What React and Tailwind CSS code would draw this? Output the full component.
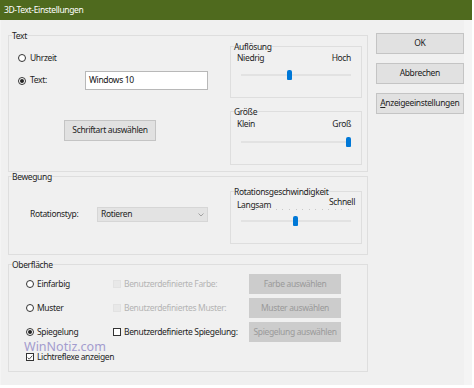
import React from "react";

const font = { fontFamily: '"Noto Sans", "Segoe UI", sans-serif' };

function Radio({ checked }) {
  return (
    <span className="w-[8px] h-[8px] rounded-full border border-[#333] bg-white flex items-center justify-center shrink-0">
      {checked && <span className="w-[4px] h-[4px] rounded-full bg-[#222]" />}
    </span>
  );
}

function Check({ checked, disabled }) {
  if (disabled) {
    return <span className="w-[8px] h-[8px] bg-[#e8e8e8] border border-[#e2e2e2] shrink-0" />;
  }
  return (
    <span className="w-[8px] h-[8px] border border-[#333] bg-white shrink-0 flex items-center justify-center">
      {checked && (
        <svg width="7" height="7" viewBox="0 0 8 8">
          <path d="M1 4.2 L3 6.2 L7 1.6" fill="none" stroke="#222" strokeWidth="1.1" />
        </svg>
      )}
    </span>
  );
}

function Slider({ pos, ticks }) {
  return (
    <div className="relative h-[10px] mx-[10px]">
      {ticks && (
        <div className="absolute left-0 right-0 top-[-7px] flex justify-between px-[2px]">
          {Array.from({ length: 17 }).map((_, i) => (
            <span key={i} className="w-[1px] h-[1px] bg-[#c8c8c8]" />
          ))}
        </div>
      )}
      <div className="absolute left-0 right-0 top-[4px] h-[2px] bg-[#e2e2e2]" />
      <div
        className="absolute top-0 w-[5px] h-[10px] bg-[#0078d7] rounded-t-[2px] rounded-b-[1px]"
        style={{ left: `calc(${pos}% - 2px)` }}
      />
    </div>
  );
}

function Group({ label, className, children }) {
  return (
    <fieldset className={`border border-[#dedede] ${className}`}>
      <legend className="ml-[3px] px-0 leading-[11px] text-[#222]">{label}</legend>
      {children}
    </fieldset>
  );
}

function Btn({ children, className = "" }) {
  return (
    <div
      className={`h-[21px] flex items-center justify-center whitespace-nowrap bg-[#e1e1e1] border border-[#c4c4c4] text-[#222] ${className}`}
    >
      {children}
    </div>
  );
}

function DisabledBtn({ children }) {
  return (
    <div className="w-[92px] h-[20px] flex items-center justify-center whitespace-nowrap bg-[#cccccc] text-[#9a9a9a]">
      {children}
    </div>
  );
}

export default function App() {
  return (
    <div className="w-[474px] h-[388px] bg-white text-[8.5px] tracking-[-0.35px] text-[#1e1e1e]" style={font}>
      <div className="w-[472px] h-[385px] bg-[#f0f0f0] flex flex-col border-r-[8px] border-[#f4f4f4] border-l-[1px]">
        <div className="h-[20px] bg-[#4f6a1e] text-white flex items-center pl-[4px] -ml-[1px] -mr-[8px] text-[8.5px]">
          3D-Text-Einstellungen
        </div>
        <div className="flex pt-[10px] pl-[7px]">
          {/* left column */}
          <div className="w-[362px] flex flex-col">
            <Group label="Text" className="h-[142px]">
              <div className="flex">
                <div className="w-[221px] flex flex-col pl-[9px]">
                  <div className="mt-[10px] h-[14px] flex items-center gap-[4px]">
                    <Radio />
                    <span>Uhrzeit</span>
                  </div>
                  <div className="mt-[6px] flex items-center">
                    <div className="w-[67px] flex items-center gap-[4px]">
                      <Radio checked />
                      <span>Text:</span>
                    </div>
                    <div className="w-[123px] h-[19px] bg-white border border-[#b8b8b8] flex items-center pl-[3px] text-[#111]">
                      Windows 10
                    </div>
                  </div>
                  <Btn className="mt-[30px] ml-[46px] w-[92px] h-[18px]">Schriftart auswählen</Btn>
                </div>
                <div className="flex flex-col">
                  <Group label="Auflösung" className="w-[132px] h-[57px]">
                    <div className="flex justify-between pl-[6px] pr-[10px] leading-[11px]">
                      <span>Niedrig</span>
                      <span>Hoch</span>
                    </div>
                    <div className="mt-[7px]">
                      <Slider pos={44} />
                    </div>
                  </Group>
                  <Group label="Größe" className="w-[132px] h-[59px] mt-[8px]">
                    <div className="flex justify-between pl-[6px] pr-[10px] leading-[11px] mt-[1px]">
                      <span>Klein</span>
                      <span>Groß</span>
                    </div>
                    <div className="mt-[8px]">
                      <Slider pos={97} />
                    </div>
                  </Group>
                </div>
              </div>
            </Group>

            <Group label="Bewegung" className="h-[84px] -mt-[1px]">
              <div className="flex items-start">
                <div className="w-[221px] pl-[21px] pt-[25px] flex items-center">
                  <span className="w-[67px]">Rotationstyp:</span>
                  <div className="w-[111px] h-[15px] bg-[#e3e3e3] border border-[#d6d6d6] flex items-center justify-between pl-[3px] pr-[3px]">
                    <span>Rotieren</span>
                    <svg width="6" height="4" viewBox="0 0 6 4">
                      <path d="M0.5 0.5 L3 3 L5.5 0.5" fill="none" stroke="#9a9a9a" strokeWidth="0.9" />
                    </svg>
                  </div>
                </div>
                <Group label="Rotationsgeschwindigkeit" className="w-[132px] h-[58px] mt-[4px]">
                  <div className="flex justify-between items-start pl-[6px] pr-[6px] leading-[11px]">
                    <span className="mt-[2px]">Langsam</span>
                    <span className="-mt-[1px]">Schnell</span>
                  </div>
                  <div className="mt-[6px]">
                    <Slider pos={49} ticks />
                  </div>
                </Group>
              </div>
            </Group>

            <Group label="Oberfläche" className="h-[113px] mt-[4px] relative">
              <div className="flex flex-col gap-[4px] mt-[4px] pl-[17px]">
                {[
                  ["Einfarbig", false, "Benutzerdefinierte Farbe:", true, "Farbe auswählen"],
                  ["Muster", false, "Benutzerdefiniertes Muster:", true, "Muster auswählen"],
                  ["Spiegelung", true, "Benutzerdefinierte Spiegelung:", false, "Spiegelung auswählen"],
                ].map(([r, checked, c, dis, b]) => (
                  <div key={r} className="h-[20px] flex items-center">
                    <div className="w-[87px] flex items-center gap-[3px]">
                      <Radio checked={checked} />
                      <span>{r}</span>
                    </div>
                    <div className="w-[136px] flex items-center gap-[3px] whitespace-nowrap">
                      <Check disabled={dis} />
                      <span className={dis ? "text-[#b4b4b4]" : ""}>{c}</span>
                    </div>
                    <DisabledBtn>{b}</DisabledBtn>
                  </div>
                ))}
                <div className="mt-[4px] h-[14px] flex items-center gap-[3px]">
                  <Check checked />
                  <span>Lichtreflexe anzeigen</span>
                </div>
              </div>
              <span className="absolute left-[15px] top-[68px] text-[12.5px] tracking-normal text-[#6f63b8] opacity-60 pointer-events-none">
                WinNotiz.com
              </span>
            </Group>
          </div>

          {/* right column */}
          <div className="ml-[8px] w-[89px] flex flex-col gap-[9px] pt-[3px]">
            <Btn className="border-[#0078d7]">OK</Btn>
            <Btn>Abbrechen</Btn>
            <Btn>
              <span>
                <span className="underline">A</span>nzeigeeinstellungen
              </span>
            </Btn>
          </div>
        </div>
      </div>
    </div>
  );
}
